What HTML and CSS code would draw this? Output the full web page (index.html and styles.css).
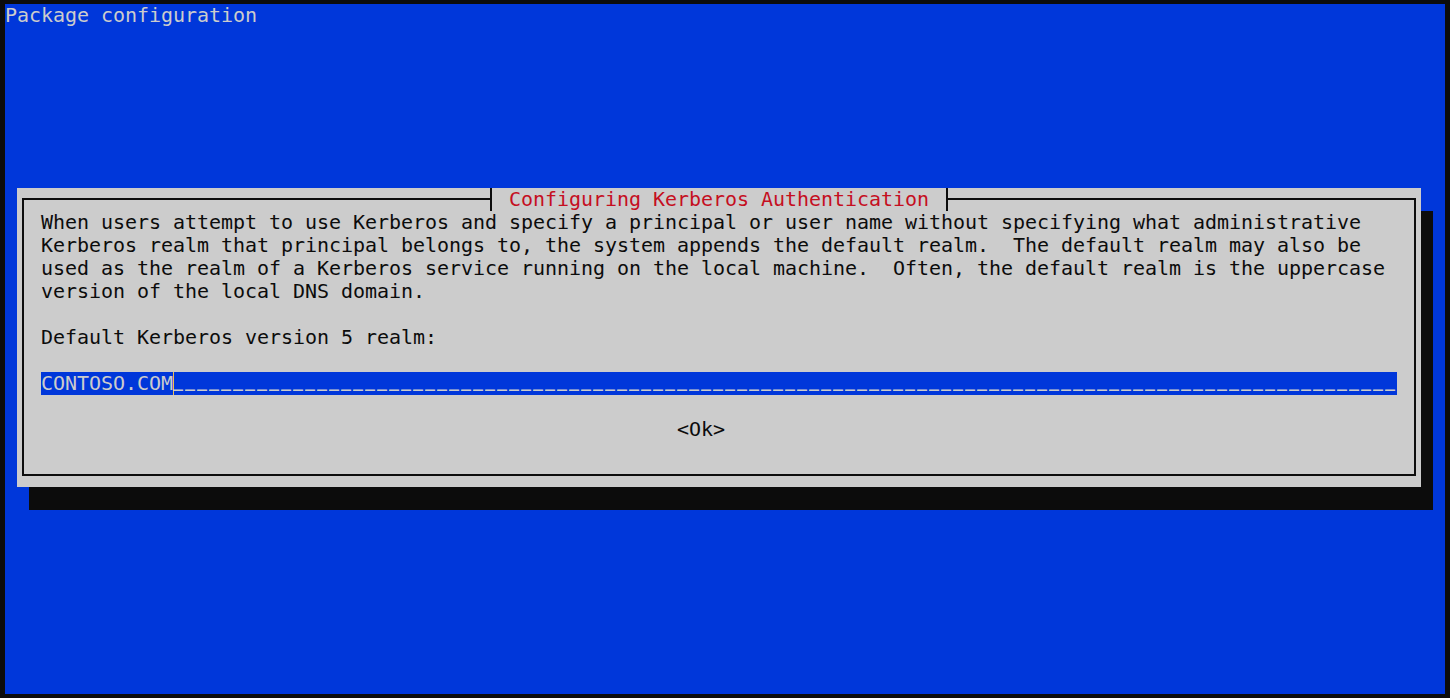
FILE: index.html
```html
<!DOCTYPE html>
<html lang="en">
<head>
    <meta charset="UTF-8">
    <meta name="viewport" content="width=device-width, initial-scale=1.0">
    <title>Package configuration</title>
    <link rel="stylesheet" href="styles.css">
</head>
<body>

<div class="screen">
    <div class="screen-title">Package configuration</div>

    <!-- Dialog window -->
    <div class="dialog">
        <div class="frame">
            <div class="dialog-title">
                <span class="tee tee-left"></span>
                <span class="dialog-title-text">Configuring Kerberos Authentication</span>
                <span class="tee tee-right"></span>
            </div>

            <div class="message">When users attempt to use Kerberos and specify a principal or user name without specifying what administrative
Kerberos realm that principal belongs to, the system appends the default realm.  The default realm may also be
used as the realm of a Kerberos service running on the local machine.  Often, the default realm is the uppercase
version of the local DNS domain.</div>

            <div class="prompt">Default Kerberos version 5 realm:</div>

            <div class="entry">CONTOSO.COM<span class="cursor"></span><span class="entry-fill">______________________________________________________________________________________________________</span></div>

            <div class="button-row"><span class="button">&lt;Ok&gt;</span></div>
        </div>
    </div>
</div>

</body>
</html>
```

FILE: styles.css
```css
/* Terminal */
body {
    margin: 0;
    padding: 4px 5px;
    background: #0c0c0c;
    font-family: "DejaVu Sans Mono", monospace;
    font-size: 20px;
    line-height: 23px;
    letter-spacing: -0.041px;
}
.screen {
    height: 690px;
    background: #0037da;
    color: #cccccc;
    overflow: hidden;
}
.screen-title {
    white-space: pre;
}

/* Dialog window */
.dialog {
    box-sizing: border-box;
    width: 1404px;
    height: 299px;
    margin: 161px 0 0 12px;
    padding: 10px 5px 11px;
    background: #cccccc;
    color: #0c0c0c;
    box-shadow: 12px 23px 0 #0c0c0c;
}
.frame {
    position: relative;
    box-sizing: border-box;
    height: 278px;
    padding: 11px 17px 0;
    border: 2px solid #0c0c0c;
}

/* Title sitting on the top border */
.dialog-title {
    position: absolute;
    top: -12px;
    left: 461px;
    display: flex;
    height: 23px;
    background: #cccccc;
}
.dialog-title-text {
    padding: 0 12px;
    color: #c50f1f;
    white-space: pre;
}
.tee {
    position: relative;
    width: 12px;
    height: 23px;
}
.tee::before {
    content: "";
    position: absolute;
    top: 0;
    bottom: 0;
    left: 5px;
    width: 2px;
    background: #0c0c0c;
}
.tee::after {
    content: "";
    position: absolute;
    top: 10px;
    height: 2px;
    background: #0c0c0c;
}
.tee-left::after { left: 0; width: 7px; }
.tee-right::after { left: 5px; right: 0; }

/* Body */
.message {
    white-space: pre;
}
.prompt {
    margin-top: 23px;
    white-space: pre;
}
.entry {
    width: 1356px;
    height: 23px;
    margin-top: 23px;
    background: #0037da;
    color: #cccccc;
    white-space: pre;
}
/* underscores: 10px dash + 2px gap per cell */
.entry-fill {
    position: relative;
    top: -3px;
    font-size: 16.61px;
    font-weight: bold;
    letter-spacing: 2px;
}
.cursor {
    display: inline-block;
    width: 0;
    height: 23px;
    margin-right: -1px;
    border-left: 1px solid #f2c14e;
    vertical-align: top;
}
.button-row {
    margin-top: 23px;
    padding-left: 636px;
}
.button {
    white-space: pre;
}
```
